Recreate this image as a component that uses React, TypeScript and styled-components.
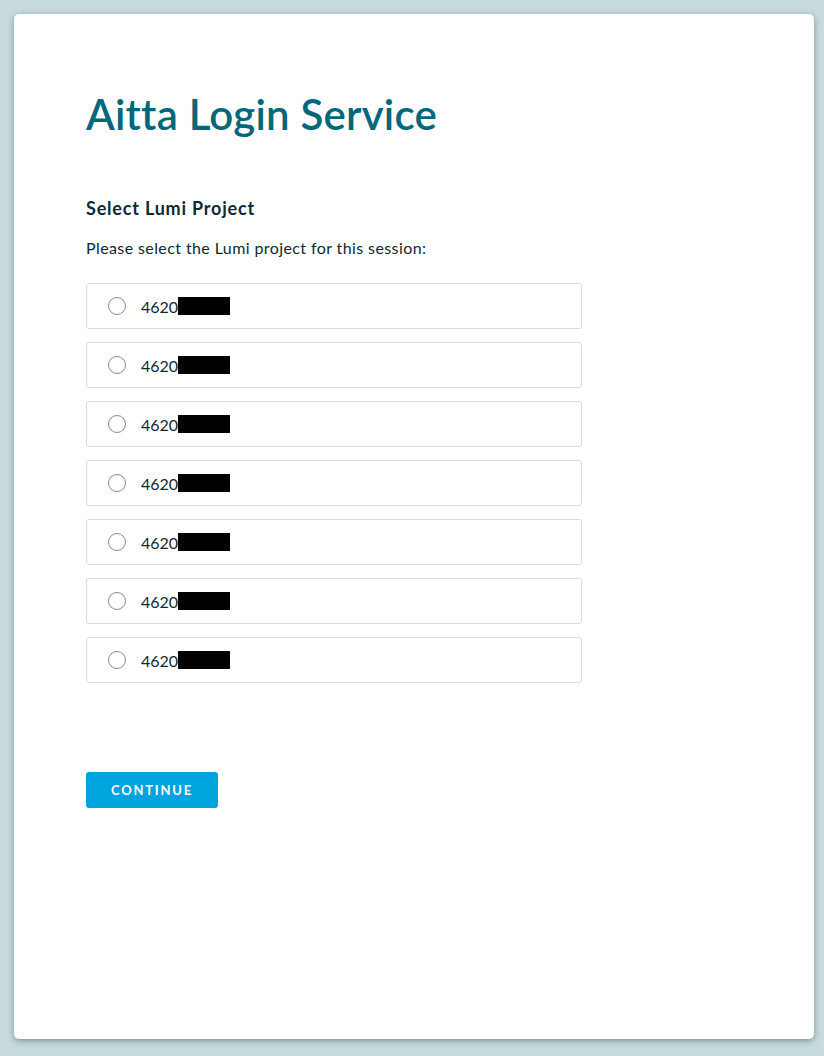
import React, { useState } from 'react';
import styled, { createGlobalStyle } from 'styled-components';

const GlobalStyle = createGlobalStyle`
  html, body {
    margin: 0;
    padding: 0;
    background: #c7dbde;
    font-family: Lato, "Open Sans", sans-serif;
  }
`;

const Page = styled.div`
  padding: 14px 10px 17px 14px;
  min-height: 1056px;
  box-sizing: border-box;
`;

const Card = styled.main`
  background: #fff;
  border-radius: 5px;
  box-shadow: 0 2px 6px rgba(60, 90, 95, 0.55);
  min-height: 1025px;
  box-sizing: border-box;
  padding: 76px 72px 40px 72px;
`;

const Title = styled.h1`
  margin: 0;
  color: #00687a;
  font-size: 42px;
  font-weight: 600;
  line-height: 48px;
  letter-spacing: 0.2px;
`;

const SubTitle = styled.h2`
  margin: 58px 0 0;
  color: #0d2a33;
  font-size: 18px;
  font-weight: 700;
  line-height: 24px;
  letter-spacing: 0.8px;
`;

const Lead = styled.p`
  margin: 18px 0 0;
  color: #0d2a33;
  font-size: 16px;
  line-height: 20px;
  letter-spacing: 0.4px;
`;

const OptionList = styled.div`
  margin-top: 25px;
  width: 496px;
  display: flex;
  flex-direction: column;
  gap: 13px;
`;

const Option = styled.label`
  height: 46px;
  box-sizing: border-box;
  border: 1px solid #dcdcdc;
  border-radius: 3px;
  display: flex;
  align-items: center;
  padding-left: 21px;
  gap: 15px;
  cursor: pointer;
  color: #0d2a33;
  font-size: 16px;
`;

const Radio = styled.span<{ $checked: boolean }>`
  width: 18px;
  height: 18px;
  box-sizing: border-box;
  border-radius: 50%;
  border: 1px solid #8a8a8a;
  background: ${p => (p.$checked ? 'radial-gradient(#00a3dc 40%, #fff 45%)' : '#fff')};
`;

const Code = styled.span`
  display: flex;
  align-items: center;
`;

const Redacted = styled.span`
  display: inline-block;
  width: 52px;
  height: 18px;
  background: #000;
`;

const Button = styled.button`
  margin-top: 89px;
  width: 132px;
  height: 36px;
  border: none;
  border-radius: 3px;
  background: #00a4dc;
  color: #fff;
  font-family: Lato, "Open Sans", sans-serif;
  font-size: 13px;
  font-weight: 700;
  letter-spacing: 1.8px;
  cursor: pointer;
`;

const projects = ['a', 'b', 'c', 'd', 'e', 'f', 'g'];

export default function App() {
  const [selected, setSelected] = useState<string | null>(null);
  return (
    <>
      <GlobalStyle />
      <Page>
        <Card>
          <Title>Aitta Login Service</Title>
          <SubTitle>Select Lumi Project</SubTitle>
          <Lead>Please select the Lumi project for this session:</Lead>
          <OptionList>
            {projects.map(p => (
              <Option key={p} onClick={() => setSelected(p)}>
                <Radio $checked={selected === p} />
                <Code>
                  4620
                  <Redacted />
                </Code>
              </Option>
            ))}
          </OptionList>
          <Button>CONTINUE</Button>
        </Card>
      </Page>
    </>
  );
}
